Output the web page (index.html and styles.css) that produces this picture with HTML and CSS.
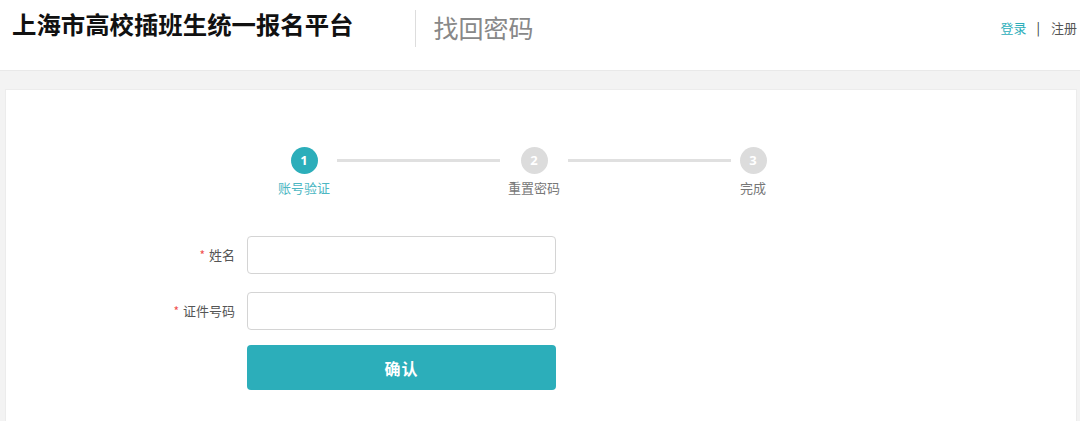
FILE: index.html
```html
<!DOCTYPE html>
<html lang="zh-CN">
<head>
<meta charset="utf-8">
<title>找回密码</title>
<link rel="stylesheet" href="styles.css">
</head>
<body>
<header class="header">
  <div class="brand">
    <h1 class="site-title">上海市高校插班生统一报名平台</h1>
    <span class="divider"></span>
    <span class="page-title">找回密码</span>
  </div>
  <nav class="user-links">
    <a class="link-login" href="#">登录</a>
    <span class="sep">|</span>
    <a class="link-reg" href="#">注册</a>
  </nav>
</header>
<main class="main">
  <section class="card">
    <div class="steps">
      <div class="step step-active step-1">
        <span class="circle">1</span>
        <span class="step-label">账号验证</span>
      </div>
      <div class="line line-1"></div>
      <div class="step step-2">
        <span class="circle">2</span>
        <span class="step-label">重置密码</span>
      </div>
      <div class="line line-2"></div>
      <div class="step step-3">
        <span class="circle">3</span>
        <span class="step-label">完成</span>
      </div>
    </div>
    <form class="form">
      <div class="row">
        <label class="label"><span class="req">*</span>姓名</label>
        <input class="input" type="text">
      </div>
      <div class="row">
        <label class="label"><span class="req">*</span>证件号码</label>
        <input class="input" type="text">
      </div>
      <div class="row">
        <span class="label"></span>
        <button class="btn" type="button">确认</button>
      </div>
    </form>
  </section>
</main>
</body>
</html>
```
FILE: styles.css
```css
* { box-sizing: border-box; }
html, body { margin: 0; padding: 0; }
body {
  font-family: "Noto Sans CJK SC", "Noto Sans", "Liberation Sans", sans-serif;
  background: #f3f3f3;
  color: #333;
  height: 421px;
  overflow: hidden;
}
.header {
  height: 71px;
  background: #fff;
  border-bottom: 1px solid #e9e9e9;
  display: flex;
  align-items: flex-start;
  justify-content: space-between;
  padding: 6px 3px 0 12px;
}
.brand { display: flex; align-items: flex-start; }
.site-title {
  margin: 0;
  font-size: 24.4px;
  font-weight: 700;
  color: #111;
  line-height: 36px;
}
.divider {
  width: 1px;
  height: 37px;
  background: #ddd;
  margin: 4px 17px 0 62px;
}
.page-title {
  font-size: 25px;
  color: #888;
  line-height: 36px;
  margin-top: 3px;
}
.user-links {
  display: flex;
  align-items: center;
  font-size: 13px;
  line-height: 18px;
  margin-top: 13px;
}
.user-links a { text-decoration: none; }
.link-login { color: #2caeba; }
.link-reg { color: #555; }
.sep { color: #333; margin: 0 11px 0 10px; }
.main { padding: 18px 3px 0 5px; }
.card {
  background: #fff;
  border: 1px solid #ececec;
  height: 340px;
  padding-top: 57px;
}
.steps {
  display: flex;
  align-items: flex-start;
  margin-left: 272px;
}
.step {
  display: flex;
  flex-direction: column;
  align-items: center;
}
.step-1, .step-2 { width: 52px; }
.step-3 { width: 28px; }
.circle {
  width: 27px;
  height: 27px;
  border-radius: 50%;
  background: #dcdcdc;
  color: #fff;
  font-size: 13px;
  font-weight: 700;
  line-height: 27px;
  text-align: center;
  font-family: "Open Sans", "Liberation Sans", sans-serif;
}
.step-label {
  margin-top: 5px;
  font-size: 13px;
  line-height: 18px;
  color: #777;
  white-space: nowrap;
}
.step-active .circle { background: #2caeba; }
.step-active .step-label { color: #4db7c3; }
.line {
  height: 3px;
  background: #e0e0e0;
  margin-top: 12px;
}
.line-1 { width: 163px; margin-left: 7px; margin-right: 8px; }
.line-2 { width: 163px; margin-left: 8px; margin-right: 8px; }
.form {
  margin-top: 39px;
  margin-left: 129px;
}
.row {
  display: flex;
  align-items: center;
  margin-bottom: 18px;
}
.row:last-child { margin-top: -3px; }
.label {
  width: 100px;
  text-align: right;
  font-size: 13px;
  color: #555;
  margin-right: 12px;
  line-height: 18px;
}
.req { color: #f05050; margin-right: 4px; font-size: 12px; }
.input {
  width: 309px;
  height: 38px;
  border: 1px solid #d4d4d4;
  border-radius: 4px;
  background: #fff;
  padding: 0 10px;
  font-size: 14px;
  outline: none;
}
.btn {
  width: 309px;
  height: 45px;
  border: none;
  border-radius: 4px;
  background: #2caeba;
  color: #fff;
  font-family: "Noto Sans CJK SC", sans-serif;
  font-size: 16px;
  font-weight: 700;
  letter-spacing: 1px;
  cursor: pointer;
}
```
